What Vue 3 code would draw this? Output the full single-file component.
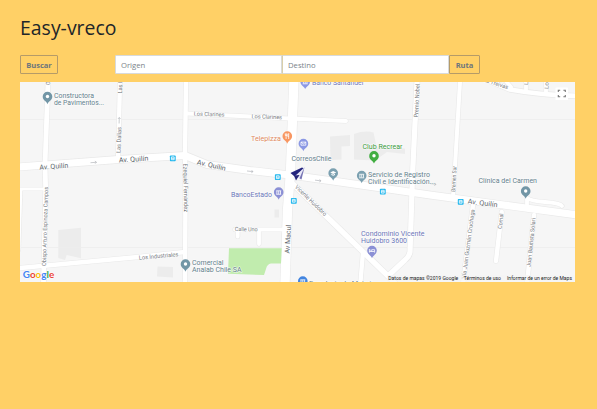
<script setup>
const roads = [
  { d: 'M20 189H45M21 189L19 250', w: 3 },
  { d: 'M20 268L138 257L185 252', w: 4.5 },
  { d: 'M48 82L45 165L45.7 190L43.5 282', w: 5 },
  { d: 'M120 82L118 160', w: 4.5 },
  { d: 'M186 82L185 155L185.5 190L185 282', w: 4.6 },
  { d: 'M187 113.5L290 118.5L346 121', w: 4.2 },
  { d: 'M235 229.5H285M237.7 230V236.5M259 230V244', w: 4 },
  { d: 'M417 82L412.5 175L411.7 200L410 252Q409 257 405 260L388 276L396 284', w: 5.4 },
  { d: 'M293 184L388 276', w: 5.6 },
  { d: 'M363 252L360.5 282', w: 4.5 },
  { d: 'M460 82L454 183L453 197', w: 4.2 },
  { d: 'M485 79L510 89.5Q540 95 577 96', w: 5 },
  { d: 'M526 80V91M546 80V93M505 80L511 87', w: 4 },
  { d: 'M473 205L463 284', w: 4.6 },
  { d: 'M501.7 212L496 261', w: 4.6 },
  { d: 'M534 215L527 284', w: 4.6 },
  { d: 'M527 208V198Q531 201 545 202Q560 203 562 206', w: 4 },
  { d: 'M294 78L290.5 172L287.5 210L285 284', w: 9.5 },
  { d: 'M18 167L45 165L118 159.5L185 155.5L207 164.5L250 170.5L290 175L340 182L430 195L577 215', w: 7.4 }
]

const slate = '#63808c'
const violet = '#6b76b8'
const grey = '#777b7f'

const labels = [
  { t: 'Constructora', x: 54, y: 98, l: 40, c: slate },
  { t: 'de Pavimentos...', x: 54, y: 105, l: 50, c: slate },
  { t: 'Telepizza', x: 251, y: 141.2, l: 30, c: '#e08a62' },
  { t: 'Banco Santander', x: 312, y: 85.4, l: 52, c: violet },
  { t: 'CorreosChile', x: 291.5, y: 160.5, l: 40, c: slate },
  { t: 'Club Recrear', x: 362.5, y: 148.5, l: 40, c: '#3a9a3c' },
  { t: 'Servicio de Registro', x: 368, y: 177, l: 62, c: slate },
  { t: 'Civil e Identificación...', x: 368, y: 184, l: 67, c: slate },
  { t: 'Clínica del Carmen', x: 478.5, y: 183.3, l: 58.5, c: slate },
  { t: 'BancoEstado', x: 231, y: 196.6, l: 41, c: violet },
  { t: 'Comercial', x: 192, y: 265, l: 31.5, c: slate },
  { t: 'Analab Chile SA', x: 192, y: 272, l: 49.5, c: slate },
  { t: 'Condominio Vicente', x: 361, y: 236, l: 63.5, c: violet },
  { t: 'Huidobro 3600', x: 361, y: 243, l: 46, c: violet },
  { t: 'Ferretería de Maipú', x: 309, y: 285.7, l: 63, c: slate }
]

const streets = [
  { t: 'Av. Quilín', x: 39.5, y: 169.7, r: -4, l: 29, s: 7 },
  { t: 'Av. Quilín', x: 119, y: 162.6, r: -4, l: 29.5, s: 7 },
  { t: 'Av. Quilín', x: 196.5, y: 164.2, r: 13, l: 29.5, s: 7 },
  { t: 'Av. Quilín', x: 467.5, y: 203.5, r: 7, l: 30, s: 7 },
  { t: 'Los Clarines', x: 193.8, y: 115.6, r: 2, l: 30.5, s: 5.8 },
  { t: 'Los Clarines', x: 251.5, y: 118.2, r: 2, l: 30.5, s: 5.8 },
  { t: 'Las Dalias', x: 120.5, y: 153, r: -88, l: 26, s: 6 },
  { t: 'Las Dalias', x: 122, y: 93.5, r: -88, l: 26, s: 6 },
  { t: 'Obispo Arturo Espinoza Campos', x: 46, y: 266, r: -88.5, l: 79, s: 5.8 },
  { t: 'Obispo', x: 50, y: 85, r: -88, l: 16, s: 5.8 },
  { t: 'Ezequiel Fernandez', x: 183.3, y: 163.5, r: 89, l: 48.5, s: 6 },
  { t: 'Los Industriales', x: 139, y: 259.7, r: -5, l: 39.5, s: 5.8 },
  { t: 'Calle Uno', x: 234.7, y: 231, r: 1, l: 23, s: 5.8 },
  { t: 'Av Macul', x: 289.6, y: 253.5, r: -87, l: 28.5, s: 7 },
  { t: 'Vicente Huidobro', x: 294.5, y: 187.5, r: 44, l: 41.5, s: 6 },
  { t: 'Premio Nobel', x: 418, y: 117.5, r: -87, l: 33.5, s: 6 },
  { t: 'Bremen Sur', x: 455.2, y: 192, r: -87, l: 26, s: 5.8 },
  { t: 'Vía Juan Guzmán Cruchaga', x: 465.5, y: 279, r: -82.5, l: 70, s: 5.8 },
  { t: 'Comal', x: 501.8, y: 229, r: -84, l: 15.5, s: 5.8 },
  { t: 'Juan Bautista Solari', x: 530.5, y: 267, r: -84, l: 49, s: 5.8 },
  { t: 'Las Treivas', x: 480, y: 80.5, r: 17.5, l: 29, s: 5.8 },
  { t: 'Los', x: 528, y: 85, r: -88, l: 10, s: 5.8 },
  { t: 'Los', x: 548.5, y: 89, r: -88, l: 10, s: 5.8 }
]

const pins = [
  { x: 47.5, y: 97, c: '#7296a6', k: 'dot' },
  { x: 185.5, y: 264.5, c: '#7296a6', k: 'dot' },
  { x: 525.7, y: 191.5, c: '#7296a6', k: 'dot' },
  { x: 374, y: 156.3, c: '#42ae42', k: 'dot' },
  { x: 287.3, y: 136.5, c: '#f89661', k: 'fork' },
  { x: 303.4, y: 144, c: '#8b98e4', k: 'mail' },
  { x: 305.2, y: 82, c: '#8b98e4', k: 'bank' },
  { x: 278.7, y: 192.5, c: '#8b90d5', k: 'bank' },
  { x: 372, y: 251, c: '#8b90d5', k: 'bed' },
  { x: 333.2, y: 173.5, c: '#7ba0b0', k: 'cap' },
  { x: 361.7, y: 176, c: '#7ba0b0', k: 'bank' },
  { x: 302.8, y: 281.5, c: '#4285e0', k: 'bank' }
]

const stops = [[172.8, 158.3], [277.8, 177.2], [293.8, 200.8], [382.8, 191.7], [460.7, 201.8]]

const arrows = [[93.5, 162.5, -4], [250, 171.3, 6], [318, 180.5, 7], [119.2, 120.5, -88], [433, 184, 8]]
</script>

<template>
  <main class="page">
    <h1 class="title">Easy-vreco</h1>
    <form class="toolbar" @submit.prevent>
      <button class="btn search" type="button">Buscar</button>
      <div class="group">
        <input class="field" type="text" placeholder="Origen" />
        <input class="field last" type="text" placeholder="Destino" />
        <button class="btn route" type="button">Ruta</button>
      </div>
    </form>

    <svg class="map" viewBox="20 82 555 200">
      <rect x="20" y="82" width="555" height="200" fill="#f6f6f6" />
      <g fill="#ececec">
        <path d="M58.3 230L81 227.7V258.3L66.7 255L65 260L58.3 258z" />
        <path d="M330 136.5L350 135V146L341.5 146.5V159.5L330.5 160z" />
        <path d="M354 134Q365 130 373.5 132.5L376.5 146.5L405 148.5V154L387 152L375 160.5L354 159.5z" />
        <path d="M157.5 266.5L173 267V277.5L157 276.5z" />
        <rect x="274.5" y="209.5" width="4.5" height="8" />
      </g>
      <path d="M20 119.5H575M20 247.5H575" class="tile" />

      <path v-for="(r, i) in roads" :key="'c' + i" :d="r.d" class="road casing" :stroke-width="r.w + 1" />
      <path v-for="(r, i) in roads" :key="'r' + i" :d="r.d" class="road" :stroke-width="r.w - 0.2" />
      <path d="M229 248.2H281.7L281 263.5H271Q267 264 266 269L264 275L228 273.7z" class="park" />

      <g v-for="(a, i) in arrows" :key="'a' + i" :transform="`translate(${a[0]} ${a[1]}) rotate(${a[2]})`">
        <path d="M-3 0H3M1.5 -1.3L3 0L1.5 1.3" class="arrow" />
      </g>

      <text
        v-for="(s, i) in streets" :key="'s' + i"
        :transform="`translate(${s.x} ${s.y}) rotate(${s.r})`"
        :font-size="s.s" :textLength="s.l" lengthAdjust="spacingAndGlyphs"
        class="halo" :fill="s.s === 7 ? '#62686d' : grey"
      >{{ s.t }}</text>

      <g v-for="(s, i) in stops" :key="'b' + i" :transform="`translate(${s[0]} ${s[1]})`">
        <rect x="-2.9" y="-2.9" width="5.8" height="5.8" rx="0.8" fill="#20b7ee" />
        <path d="M-1.4 -1.4H1.4V1.4H-1.4zM-1.4 0H1.4" class="glyph" />
      </g>

      <g v-for="(p, i) in pins" :key="'p' + i" :transform="`translate(${p.x} ${p.y})`">
        <path d="M0 7.2C-0.7 4.5-4.8 3.7-4.8-0.4A4.8 4.8 0 0 1 4.8-0.4C4.8 3.7 0.7 4.5 0 7.2z" :fill="p.c" />
        <circle v-if="p.k === 'dot'" cy="-0.5" r="1.7" fill="#fff" />
        <path v-else-if="p.k === 'fork'" d="M-1.2-3V-.8M-1.2-.8V2.5M-2-3V-1H-.4V-3M1.4 2.5V-3Q.3-2 .5 0H1.4" class="glyph" />
        <path v-else-if="p.k === 'mail'" d="M-2.4-1.9H2.4V1.2H-2.4zM-2.4-1.9L0 0L2.4-1.9" class="glyph" />
        <path v-else-if="p.k === 'cap'" d="M-3-1L0-2.6L3-1L0 .6zM-1.8 .2V1.4L0 2.3L1.8 1.4V.2L0 1.2z" fill="#fff" />
        <path v-else-if="p.k === 'bed'" d="M-2.6-2V1.6M-2.6.5H2.6V1.6M2.6.5V-1.3H-.3V.5M-1.8-.8H-1" class="glyph" />
        <path v-else d="M-2.5-1.7H2.5M-2.5 1.8H2.5M-1.8-1.5V1.5M0-1.5V1.5M1.8-1.5V1.5" class="glyph" />
      </g>

      <text
        v-for="(l, i) in labels" :key="'l' + i" :x="l.x" :y="l.y" :fill="l.c"
        font-size="7.2" :textLength="l.l" lengthAdjust="spacingAndGlyphs" class="halo"
      >{{ l.t }}</text>

      <g>
        <path d="M290.5 172.5L305 167L300.5 180L297 177L293.5 179.5L294 175.5z" fill="#e9e9f8" />
        <path d="M290.5 173L302 167.5L303.5 168.2L294.5 176.5z" fill="#24247e" />
        <path d="M304.5 167L301.5 179.5L299.5 178.3z" fill="#7775b4" />
        <path d="M294 175.5L299.5 175L296 180.5z" fill="#26257a" />
      </g>

      <rect x="555.5" y="87.5" width="12.5" height="12.5" rx="0.6" fill="#fff" />
      <path d="M558.3 92V90.2H560.2M563.4 90.2H565.3V92M565.3 95V96.8H563.4M560.2 96.8H558.3V95" class="full" />

      <text x="22.8" y="278" font-size="10" textLength="31.4" lengthAdjust="spacingAndGlyphs" class="brand"><tspan fill="#4285f4">G</tspan><tspan fill="#ea4335">o</tspan><tspan fill="#fbbc05">o</tspan><tspan fill="#4285f4">g</tspan><tspan fill="#34a853">l</tspan><tspan fill="#ea4335">e</tspan></text>

      <rect x="387" y="275" width="188" height="7" fill="#f5f5f5" fill-opacity="0.65" />
      <g font-size="5.2" class="legal">
        <text x="388.3" y="280.2" textLength="70" lengthAdjust="spacingAndGlyphs">Datos de mapas ©2019 Google</text>
        <text x="463.8" y="280.2" textLength="37.2" lengthAdjust="spacingAndGlyphs">Términos de uso</text>
        <text x="507" y="280.2" textLength="65" lengthAdjust="spacingAndGlyphs">Informar de un error de Maps</text>
      </g>
    </svg>
  </main>
</template>

<style>
body {
  margin: 0;
  background: #ffd066;
}
</style>

<style scoped>
.page {
  box-sizing: border-box;
  padding: 15px 22px 0 20px;
  font-family: "Open Sans", "Noto Sans", sans-serif;
}
.title {
  margin: 0;
  height: 40px;
  font-size: 19.4px;
  line-height: 26px;
  font-weight: 500;
  letter-spacing: 0.03px;
  color: #212529;
}
.toolbar {
  display: flex;
  height: 19px;
  margin-bottom: 8px;
}
.search {
  width: 38px;
  margin-right: 57px;
}
.group {
  display: flex;
}
.btn,
.field {
  box-sizing: border-box;
  height: 19px;
  font-family: inherit;
  font-size: 7.7px;
  line-height: 10px;
}
.btn {
  padding: 0;
  border: 1px solid #b59b68;
  border-radius: 1px;
  background: transparent;
  color: #6c757d;
  font-weight: 700;
  font-size: 7.5px;
}
.route {
  width: 31px;
}
.field {
  width: 167px;
  margin: 0;
  padding: 0 5px;
  border: 1px solid #d8dadb;
  border-radius: 1px 0 0 1px;
  background: #fff;
  color: #495057;
}
.field.last {
  border-left-color: #d9cfaa;
  border-radius: 0;
}
.field::placeholder {
  color: #7b838a;
  opacity: 1;
}
.map {
  display: block;
  width: 555px;
  height: 200px;
  overflow: hidden;
  font-family: Roboto, sans-serif;
}
.tile {
  fill: none;
  stroke: #ededed;
  stroke-width: 0.8;
}
.park {
  fill: #c1ecae;
}
.road {
  fill: none;
  stroke: #fff;
  stroke-linejoin: round;
  stroke-linecap: round;
}
.casing {
  stroke: #e9e9e9;
}
.arrow {
  fill: none;
  stroke: #b5b8bd;
  stroke-width: 0.7;
}
.halo {
  paint-order: stroke;
  stroke: #fff;
  stroke-opacity: 0.75;
  stroke-width: 1.2px;
}
.glyph {
  fill: none;
  stroke: #fff;
  stroke-width: 0.8;
}
.full {
  fill: none;
  stroke: #777;
  stroke-width: 1.1;
}
.brand {
  font-family: Lato, sans-serif;
  font-weight: 700;
  paint-order: stroke;
  stroke: #fff;
  stroke-width: 0.8px;
}
.legal {
  fill: #222;
}
</style>
